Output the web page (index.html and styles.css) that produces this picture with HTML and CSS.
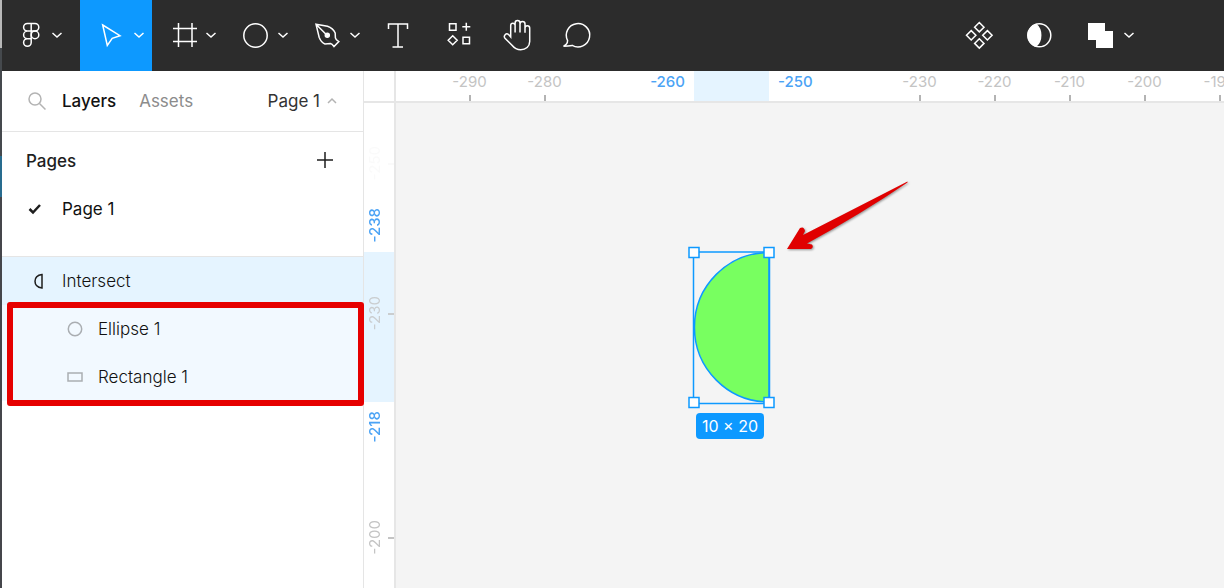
FILE: index.html
```
<!DOCTYPE html>
<html lang="en">
  <head>
    <meta charset="utf-8" />
    <title>Figma - Intersect</title>
    <link rel="stylesheet" href="styles.css" />
  </head>
  <body>
    <div id="edge"></div>
    <div id="app">
      <header class="toolbar">
        <button class="tool menu" aria-label="Main menu">
          <svg class="icon" viewBox="0 0 32 35">
            <path d="M16.2 5.5H12.4a3.8 3.8 0 0 0 0 7.6h3.8zM16.2 5.5H20a3.8 3.8 0 0 1 0 7.6h-3.8zM16.2 13.1h-3.8a3.8 3.8 0 0 0 0 7.6h3.8zM16.2 20.7h-3.8a3.8 3.8 0 1 0 3.8 3.8z" />
            <circle cx="20" cy="16.9" r="3.8" />
          </svg>
          <svg class="arrow" viewBox="0 0 10 35"><path d="M.5 15 5 19l4.500-4" /></svg>
        </button>
        <button class="tool active" aria-label="Move">
          <svg class="icon" viewBox="0 0 36 35">
            <path d="M9.700 7 27 17.700l-7.800 2.600-4.900 7.200z" />
          </svg>
          <svg class="arrow" viewBox="0 0 10 35"><path d="M.5 15 5 19l4.500-4" /></svg>
        </button>
        <button class="tool" aria-label="Frame">
          <svg class="icon" viewBox="0 0 36 35">
            <path d="M13.500 5v24M27 5v24M8 10.500h24M8 23.500h24" />
          </svg>
          <svg class="arrow" viewBox="0 0 10 35"><path d="M.5 15 5 19l4.500-4" /></svg>
        </button>
        <button class="tool" aria-label="Ellipse">
          <svg class="icon" viewBox="0 0 36 35"><circle cx="18.500" cy="17.500" r="11.700" /></svg>
          <svg class="arrow" viewBox="0 0 10 35"><path d="M.5 15 5 19l4.500-4" /></svg>
        </button>
        <button class="tool" aria-label="Pen">
          <svg class="icon" viewBox="0 0 36 35">
            <path d="M7 6.200 18.500 8.200q5.500 2 7.700 6.800l.2 4.800q.2 1.600 3.400 3.800l-4.800 4.900q-2-2.800-3.500-3l-5.500.5Q12.500 25 10.200 19.500zM7 6.200l10 10" />
            <circle class="solid" cx="18.300" cy="17.300" r="2" />
          </svg>
          <svg class="arrow" viewBox="0 0 10 35"><path d="M.5 15 5 19l4.500-4" /></svg>
        </button>
        <button class="tool single" aria-label="Text">
          <svg class="icon" viewBox="0 0 36 35">
            <path d="M8.500 11V6h19v5M18 6v23M12.500 29h10.500" />
          </svg>
        </button>
        <button class="tool single" aria-label="Resources">
          <svg class="icon" viewBox="0 0 36 35">
            <path d="M9.500 5.700h6.500v6.500H9.500zM23 19.200h6.500v6.500H23zM26.300 4.700v8M22.300 8.700h8M12.700 17.800l4.500 4.500-4.500 4.500-4.500-4.500z" />
          </svg>
        </button>
        <button class="tool single" aria-label="Hand">
          <svg class="icon" viewBox="0 0 36 35">
            <path d="M10.700 19V7.500a2.200 2.200 0 0 1 4.400 0v7V5a2.400 2.400 0 0 1 4.900 0v9.500V6a2.500 2.500 0 0 1 5 0v8.700V10a2.300 2.300 0 0 1 4.700 0v13.500c0 5-4 8.200-9 8.200-4 0-6.500-1.700-8.700-4.500L5 20.300c-2-2.600 1.200-5.800 3.600-3.700z" />
          </svg>
        </button>
        <button class="tool single" aria-label="Comment">
          <svg class="icon" viewBox="0 0 36 35">
            <path d="M3.500 28.200q4-1.500 4.100-5.600A11.700 11.700 0 1 1 12.200 27.400q-4 .8-8.700.8z" />
          </svg>
        </button>
        <div class="actions">
          <button class="tool single" aria-label="Create component">
            <svg class="icon" viewBox="0 0 36 35">
              <path d="m17.300 4.500 4.700 4.700-4.700 4.700-4.700-4.700zM17.300 20.700l4.700 4.700-4.700 4.700-4.700-4.700zM9.200 12.600l4.700 4.700-4.700 4.700-4.700-4.700zM25.400 12.600l4.700 4.700-4.700 4.700-4.700-4.700z" />
            </svg>
          </button>
          <button class="tool single" aria-label="Use as mask">
            <svg class="icon" viewBox="0 0 36 35">
              <circle cx="17.300" cy="17.300" r="11.500" />
              <path class="solid" d="M14 6.400q4.700 4 4.700 10.900T14 28.200A11.500 11.500 0 0 1 14 6.400z" />
            </svg>
          </button>
          <button class="tool" aria-label="Boolean groups">
            <svg class="icon" viewBox="0 0 36 35">
              <path class="fill" d="M5 5h17v8h8v17H13v-8H5z" />
            </svg>
            <svg class="arrow" viewBox="0 0 10 35"><path d="M.5 15 5 19l4.500-4" /></svg>
          </button>
        </div>
      </header>

      <div class="workspace">
        <aside class="sidebar">
          <div class="tabs">
            <svg class="search" viewBox="0 0 36 36">
              <circle cx="16" cy="16" r="6" />
              <path d="m20.500 20.500 6 6" />
            </svg>
            <button class="tab selected">Layers</button>
            <button class="tab">Assets</button>
            <button class="page-toggle">
              Page 1
              <svg viewBox="0 0 10 10"><path d="m1 7 4-4 4 4" /></svg>
            </button>
          </div>

          <section class="pages">
            <div class="pages-head">
              <h2>Pages</h2>
              <button class="add" aria-label="Add page">
                <svg viewBox="0 0 18 18"><path d="M9 0v16M1 8h16" /></svg>
              </button>
            </div>
            <button class="row">
              <svg class="check" viewBox="0 0 18 18"><path d="m3.500 9 3.500 3.500 7-7.500" /></svg>
              Page 1
            </button>
          </section>

          <section class="layers">
            <button class="row group">
              <svg class="check" viewBox="0 0 18 18"><path class="thin" d="M16 2.500v13.500q-7-.8-7-6.700t7-6.800z" /></svg>
              Intersect
            </button>
            <button class="row child">
              <svg viewBox="0 0 18 18"><circle cx="9" cy="9" r="6.700" /></svg>
              Ellipse 1
            </button>
            <button class="row child">
              <svg viewBox="0 0 18 18"><path d="M2 5h14v8H2z" /></svg>
              Rectangle 1
            </button>
            <div class="highlight"></div>
          </section>
        </aside>

        <main class="stage">
          <div class="corner"></div>
          <div class="ruler-x">
            <span></span>
            <span class="mark">-290</span>
            <span class="mark">-280</span>
            <span class="start">-260</span>
            <span class="range"></span>
            <span class="end">-250</span>
            <span class="mark">-230</span>
            <span class="mark">-220</span>
            <span class="mark">-210</span>
            <span class="mark">-200</span>
            <span class="mark">-190</span>
          </div>
          <div class="ruler-y">
            <span></span>
            <span class="mark faint"><b>-250</b></span>
            <span class="start"><b>-238</b></span>
            <span class="range"><span class="mark"><b>-230</b></span></span>
            <span class="end"><b>-218</b></span>
            <span class="mark"><b>-200</b></span>
          </div>
          <div class="canvas">
            <svg class="shape" viewBox="0 0 88 165">
              <path class="half" d="M81 6.500v149.500A74.500 74.700 0 0 1 81 6.500z" />
              <path class="box" d="M5.500 6h76v151.500h-76z" />
              <path class="handle" d="M1 1.500h10v10H1zM76 1.500h10v10H76zM1 151.500h10v10H1zM76 151.500h10v10H76z" />
            </svg>
            <div class="size">10 × 20</div>
            <svg class="pointer" viewBox="0 0 124 72">
              <path d="M121.500 1.500 17 55l2-4q-1-5-5-3L1 69h24q3-2 1-4.500l-5-1Q75 34 121.500 2.500z" />
            </svg>
          </div>
        </main>
      </div>
    </div>
  </body>
</html>
```
FILE: styles.css
```
* {
  margin: 0;
  padding: 0;
  box-sizing: border-box;
}
body {
  display: flex;
  min-height: 100vh;
  overflow: hidden;
  font-family: Inter, "Liberation Sans", sans-serif;
  font-size: 17px;
  line-height: 24px;
  color: #1e1e1e;
}
button {
  border: 0;
  background: none;
  font: inherit;
  color: inherit;
  cursor: pointer;
}
svg {
  display: block;
  flex: none;
  fill: none;
}

/* strip of the window behind */
#edge {
  width: 2px;
  background: linear-gradient(
    #b8b8b8 48px,
    #45494d 48px 156px,
    #286c8f 156px 197px,
    #45464b 197px
  );
}
#app {
  flex: 1;
  min-width: 0;
  display: flex;
  flex-direction: column;
}

/* toolbar */
.toolbar {
  display: flex;
  height: 71px;
  background: #2c2c2c;
}
.tool {
  display: flex;
  align-items: center;
  gap: 5px;
  width: 72px;
  height: 71px;
  padding-left: 13px;
}
.tool.menu {
  width: 78px;
}
.tool.single {
  width: 60px;
  padding-left: 12px;
}
.tool.active {
  background: #0d99ff;
}
.tool svg {
  height: 35px;
  stroke: #fff;
  stroke-width: 1.5;
}
.icon {
  width: 36px;
}
.menu .icon {
  width: 32px;
}
.arrow {
  width: 10px;
}
.solid,
.fill {
  fill: #fff;
}
.fill {
  stroke: none;
}
.actions {
  display: flex;
  margin-left: auto;
  margin-right: 82px;
}

.workspace {
  flex: 1;
  display: flex;
}

/* left panel */
.sidebar {
  width: 362px;
  flex: none;
  background: #fff;
  border-right: 1px solid #e5e5e5;
}
.tabs {
  display: flex;
  align-items: center;
  height: 61px;
  padding: 0 26px 0 17px;
  border-bottom: 1px solid #e5e5e5;
}
.search {
  width: 36px;
  height: 36px;
  margin-right: 7px;
  stroke: #b3b3b3;
  stroke-width: 1.5;
}
.tab {
  margin-right: 23px;
  color: #8c8c8c;
}
.tab.selected {
  font-weight: 500;
  color: #111;
}
.page-toggle {
  display: flex;
  align-items: center;
  gap: 7px;
  margin-left: auto;
  color: #333;
}
.page-toggle svg {
  width: 10px;
  height: 10px;
  stroke: #b3b3b3;
  stroke-width: 1.5;
}
.pages {
  padding: 5px 0 23px;
  border-bottom: 1px solid #e5e5e5;
}
.pages-head {
  display: flex;
  align-items: center;
  justify-content: space-between;
  height: 48px;
  padding: 0 29px 0 24px;
}
h2 {
  font-size: 17px;
  font-weight: 500;
}
.add svg {
  width: 18px;
  height: 18px;
  stroke: #1e1e1e;
  stroke-width: 1.5;
}
.row {
  display: flex;
  align-items: center;
  gap: 18px;
  width: 100%;
  height: 48px;
  padding-left: 24px;
  color: #111;
}
.row svg {
  width: 18px;
  height: 18px;
  stroke: #aaaeb2;
  stroke-width: 1.5;
}
.row .check {
  stroke: #1e1e1e;
  stroke-width: 2.5;
}
.row .thin {
  stroke-width: 1.5;
}
.layers {
  position: relative;
  font-weight: 300;
}
.group {
  background: #e5f4ff;
}
.child {
  gap: 14px;
  padding-left: 64px;
  background: #f2f9ff;
}
.highlight {
  /* red frame over the two source shapes */
  position: absolute;
  z-index: 1;
  top: 45px;
  left: 5px;
  right: -1px;
  bottom: -5px;
  border: 6px solid #e60000;
  border-radius: 3px;
}

/* rulers */
.stage {
  flex: 1;
  min-width: 0;
  display: grid;
  grid-template-columns: 32px 1fr;
  grid-template-rows: 32px 1fr;
  background: #fff;
}
.corner,
.ruler-y {
  border-right: 2px solid #e6e6e6;
}
.corner,
.ruler-x {
  border-bottom: 2px solid #e6e6e6;
}
.ruler-x,
.ruler-y {
  display: grid;
  overflow: hidden;
  font-size: 15px;
  line-height: 22px;
  color: #c4c4c4;
}
.ruler-x {
  grid-template-columns: 36px 75px 75px 112px 75px 113px repeat(5, 75px);
}
.ruler-y {
  grid-template-rows: 23px 75px 51px 150px 98px 75px;
}
.ruler-x .mark {
  text-align: center;
  background: linear-gradient(#b3b3b3, #b3b3b3) bottom center / 2px 6px no-repeat;
}
.ruler-y b {
  width: 22px;
  writing-mode: vertical-rl;
  transform: rotate(180deg);
  font-weight: 400;
}
.ruler-y > span {
  display: flex;
}
.ruler-y .mark {
  display: flex;
  align-items: center;
  width: 30px;
  height: 75px;
  background: linear-gradient(#c4c4c4, #c4c4c4) right center / 6px 2px no-repeat;
}
.ruler-y .faint {
  opacity: 0.08;
}
.ruler-x .start,
.ruler-x .end,
.ruler-y .start,
.ruler-y .end {
  color: #4ba3f5;
}
.ruler-x .start,
.ruler-x .end,
.ruler-y .start b,
.ruler-y .end b {
  font-weight: 500;
}
.ruler-x .start {
  padding-right: 9px;
  text-align: right;
}
.ruler-x .end {
  padding-left: 9px;
}
.ruler-y .start {
  align-items: flex-end;
  padding-bottom: 9px;
}
.ruler-y .end {
  align-items: flex-start;
  padding-top: 9px;
}
.range {
  background: #e5f4ff;
}
.ruler-y .range {
  padding-top: 24px;
}
.range .mark {
  opacity: 0.8;
}

/* canvas */
.canvas {
  position: relative;
  overflow: hidden;
  background: #f4f4f4;
}
.shape {
  position: absolute;
  left: 292px;
  top: 143px;
  width: 88px;
  height: 165px;
  stroke: #0d99ff;
  stroke-width: 1.5;
}
.half {
  fill: #78ff60;
}
.handle {
  fill: #fff;
}
.size {
  position: absolute;
  left: 300px;
  top: 310px;
  width: 68px;
  border-radius: 4px;
  background: #0d99ff;
  color: #fff;
  font-size: 16px;
  line-height: 26px;
  text-align: center;
}
.pointer {
  position: absolute;
  left: 390px;
  top: 77px;
  width: 124px;
  height: 72px;
  fill: #e00000;
  filter: drop-shadow(1px 1px 1px rgba(0, 0, 0, 0.4));
}
```
